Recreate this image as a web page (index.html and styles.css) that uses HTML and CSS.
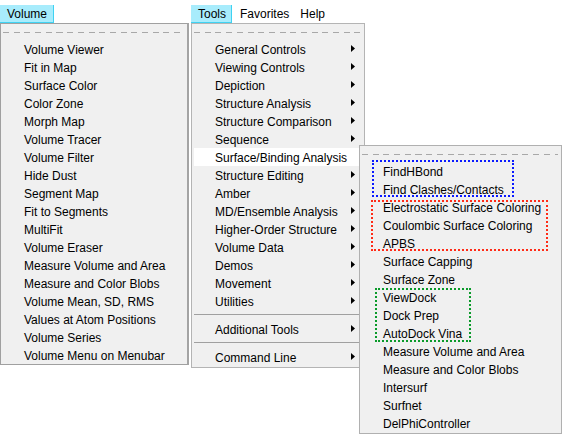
FILE: index.html
```html
<!DOCTYPE html>
<html>
<head>
<meta charset="utf-8">
<link rel="stylesheet" href="styles.css">
</head>
<body>
<div class="screen">
  <div class="menubar">
    <span class="mb active vol-btn">Volume</span>
    <span class="mb active tools-btn">Tools</span>
    <span class="mb fav-btn">Favorites</span>
    <span class="mb help-btn">Help</span>
  </div>

  <div class="menu vol-menu">
    <div class="tear"></div>
    <div class="row">Volume Viewer</div>
    <div class="row">Fit in Map</div>
    <div class="row">Surface Color</div>
    <div class="row">Color Zone</div>
    <div class="row">Morph Map</div>
    <div class="row">Volume Tracer</div>
    <div class="row">Volume Filter</div>
    <div class="row">Hide Dust</div>
    <div class="row">Segment Map</div>
    <div class="row">Fit to Segments</div>
    <div class="row">MultiFit</div>
    <div class="row">Volume Eraser</div>
    <div class="row">Measure Volume and Area</div>
    <div class="row">Measure and Color Blobs</div>
    <div class="row">Volume Mean, SD, RMS</div>
    <div class="row">Values at Atom Positions</div>
    <div class="row">Volume Series</div>
    <div class="row">Volume Menu on Menubar</div>
  </div>

  <div class="menu tools-menu">
    <div class="tear"></div>
    <div class="row sub-row"><span>General Controls</span><svg class="arr" width="4" height="7" viewBox="0 0 4 7"><path d="M0 0L4 3.5L0 7Z"/></svg></div>
    <div class="row sub-row"><span>Viewing Controls</span><svg class="arr" width="4" height="7" viewBox="0 0 4 7"><path d="M0 0L4 3.5L0 7Z"/></svg></div>
    <div class="row sub-row"><span>Depiction</span><svg class="arr" width="4" height="7" viewBox="0 0 4 7"><path d="M0 0L4 3.5L0 7Z"/></svg></div>
    <div class="row sub-row"><span>Structure Analysis</span><svg class="arr" width="4" height="7" viewBox="0 0 4 7"><path d="M0 0L4 3.5L0 7Z"/></svg></div>
    <div class="row sub-row"><span>Structure Comparison</span><svg class="arr" width="4" height="7" viewBox="0 0 4 7"><path d="M0 0L4 3.5L0 7Z"/></svg></div>
    <div class="row sub-row"><span>Sequence</span><svg class="arr" width="4" height="7" viewBox="0 0 4 7"><path d="M0 0L4 3.5L0 7Z"/></svg></div>
    <div class="row sub-row hl"><span>Surface/Binding Analysis</span></div>
    <div class="row sub-row"><span>Structure Editing</span><svg class="arr" width="4" height="7" viewBox="0 0 4 7"><path d="M0 0L4 3.5L0 7Z"/></svg></div>
    <div class="row sub-row"><span>Amber</span><svg class="arr" width="4" height="7" viewBox="0 0 4 7"><path d="M0 0L4 3.5L0 7Z"/></svg></div>
    <div class="row sub-row"><span>MD/Ensemble Analysis</span><svg class="arr" width="4" height="7" viewBox="0 0 4 7"><path d="M0 0L4 3.5L0 7Z"/></svg></div>
    <div class="row sub-row"><span>Higher-Order Structure</span><svg class="arr" width="4" height="7" viewBox="0 0 4 7"><path d="M0 0L4 3.5L0 7Z"/></svg></div>
    <div class="row sub-row"><span>Volume Data</span><svg class="arr" width="4" height="7" viewBox="0 0 4 7"><path d="M0 0L4 3.5L0 7Z"/></svg></div>
    <div class="row sub-row"><span>Demos</span><svg class="arr" width="4" height="7" viewBox="0 0 4 7"><path d="M0 0L4 3.5L0 7Z"/></svg></div>
    <div class="row sub-row"><span>Movement</span><svg class="arr" width="4" height="7" viewBox="0 0 4 7"><path d="M0 0L4 3.5L0 7Z"/></svg></div>
    <div class="row sub-row"><span>Utilities</span><svg class="arr" width="4" height="7" viewBox="0 0 4 7"><path d="M0 0L4 3.5L0 7Z"/></svg></div>
    <div class="sep"></div>
    <div class="row sub-row"><span>Additional Tools</span><svg class="arr" width="4" height="7" viewBox="0 0 4 7"><path d="M0 0L4 3.5L0 7Z"/></svg></div>
    <div class="sep"></div>
    <div class="row sub-row"><span>Command Line</span><svg class="arr" width="4" height="7" viewBox="0 0 4 7"><path d="M0 0L4 3.5L0 7Z"/></svg></div>
  </div>

  <div class="menu sub-menu">
    <div class="tear"></div>
    <div class="row">FindHBond</div>
    <div class="row">Find Clashes/Contacts</div>
    <div class="row">Electrostatic Surface Coloring</div>
    <div class="row">Coulombic Surface Coloring</div>
    <div class="row">APBS</div>
    <div class="row">Surface Capping</div>
    <div class="row">Surface Zone</div>
    <div class="row">ViewDock</div>
    <div class="row">Dock Prep</div>
    <div class="row">AutoDock Vina</div>
    <div class="row">Measure Volume and Area</div>
    <div class="row">Measure and Color Blobs</div>
    <div class="row">Intersurf</div>
    <div class="row">Surfnet</div>
    <div class="row">DelPhiController</div>
    <div class="box box-blue"></div>
    <div class="box box-red"></div>
    <div class="box box-green"></div>
  </div>
</div>
</body>
</html>
```

FILE: styles.css
```css
html, body {
  margin: 0;
  padding: 0;
  background: #ffffff;
}

.screen {
  position: relative;
  width: 565px;
  height: 435px;
  overflow: hidden;
  font-family: "Liberation Sans", Arial, sans-serif;
  font-size: 12px;
  color: #000;
}

.menubar {
  display: flex;
  padding-top: 5px;
  height: 18px;
}

.mb {
  display: block;
  height: 17px;
  line-height: 16px;
  padding-top: 1px;
  box-sizing: border-box;
  white-space: nowrap;
}

.mb.active {
  background: #a8ecfc;
  border-right: 1px solid #3fd2f2;
  border-bottom: 1px solid #3fd2f2;
  height: 18px;
}

.vol-btn {
  width: 54px;
  padding-left: 7px;
}

.tools-btn {
  margin-left: 137px;
  width: 41px;
  padding-left: 7px;
}

.fav-btn {
  padding-left: 8px;
  padding-right: 3px;
}

.help-btn {
  padding-left: 8px;
}

.menu {
  position: absolute;
  background: #f0f0f0;
  border: 1px solid #a0a0a0;
  box-sizing: border-box;
}

.vol-menu {
  left: 0;
  top: 23px;
  width: 189px;
  height: 342px;
  border-right: 2px solid #a4a4a4;
}

.tools-menu {
  left: 191px;
  top: 23px;
  width: 174px;
  height: 345px;
  border-color: #b4b4b4;
}

.sub-menu {
  left: 359px;
  top: 145px;
  width: 203px;
  height: 289px;
  border-color: #b0b0b0;
}

.tear {
  height: 16px;
  position: relative;
}

.tear::after {
  content: "";
  position: absolute;
  left: 2px;
  right: 3px;
  top: 8px;
  height: 1px;
  background: repeating-linear-gradient(to right, #a8a8a8 0, #a8a8a8 6px, transparent 6px, transparent 10.7px);
}

.row {
  height: 18px;
  box-sizing: border-box;
  padding-top: 2px;
  line-height: 16px;
  padding-left: 23px;
  white-space: nowrap;
}

.sub-row {
  display: flex;
  justify-content: space-between;
  align-items: center;
  padding-right: 9px;
}

.sub-row.hl {
  background: #ffffff;
  margin-left: 2px;
  padding-left: 21px;
}

.arr {
  display: block;
  margin-top: -4px;
  fill: #000;
}

.sep {
  height: 10px;
  position: relative;
}

.sep::after {
  content: "";
  position: absolute;
  left: 2px;
  right: 4px;
  top: 4px;
  height: 1px;
  background: #a0a0a0;
}

.box {
  position: absolute;
  box-sizing: border-box;
  border-width: 2px;
  border-style: dotted;
  pointer-events: none;
}

.box-blue {
  left: 12px;
  top: 14px;
  width: 142px;
  height: 37px;
  border-color: #0a1aff;
}

.box-red {
  left: 11px;
  top: 54px;
  width: 177px;
  height: 51px;
  border-color: #ff2b17;
}

.box-green {
  left: 15px;
  top: 142px;
  width: 96px;
  height: 54px;
  border-color: #0a9a2a;
}
```
